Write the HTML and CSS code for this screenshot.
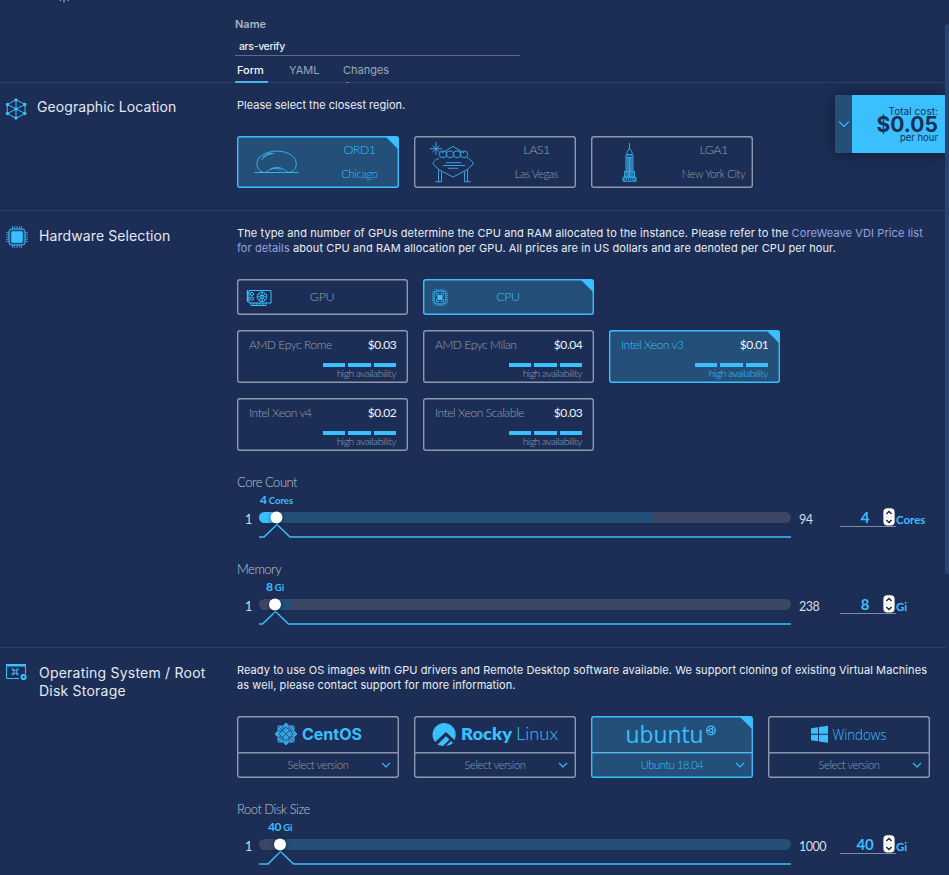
FILE: index.html
```html
<!DOCTYPE html>
<html lang="en">
<head>
<meta charset="utf-8">
<title>Virtual Server</title>
<link rel="stylesheet" href="styles.css">
</head>
<body>
<svg width="0" height="0" class="defs">
  <defs>
    <symbol id="chev" viewBox="0 0 10 6"><path d="M1 1l4 4 4-4" fill="none" stroke="#3abfff" stroke-width="1.1"/></symbol>
    <symbol id="spin" viewBox="0 0 12 18">
      <rect x=".4" y=".2" width="11.2" height="17.4" rx="4" fill="#fff"/>
      <path d="M.4 9h11.2" stroke="#ddd" stroke-width=".8"/>
      <path d="M3.4 6L6 3.5 8.600 6M3.400 12L6 14.500 8.600 12" fill="none" stroke="#222" stroke-width="1.400"/>
    </symbol>
  </defs>
</svg>
<div class="page">
  <header class="top">
    <svg class="crumb" width="12" height="3" viewBox="0 0 12 3"><path d="M1.500 0v1M5 0v2.500M9 0v1" stroke="#9aa5ba" stroke-width="1.200"/></svg>
    <label class="name-label"><span>Name</span></label>
    <div class="name-input"><span>ars-verify</span></div>
    <nav class="tabs">
      <div class="tab on"><span>Form</span></div>
      <div class="tab t2"><span>YAML</span></div>
      <div class="tab t3"><span>Changes</span></div>
    </nav>
    <div class="dot"></div>
  </header>

  <section class="sec geo">
    <div class="side">
      <svg class="ico" width="22" height="22" viewBox="0 0 22 22">
        <path d="M11 1.700L20 6.500V15.500L11 20.300 2.300 15.500V6.500zM11 1.700V20.300M2.300 6.500L20 15.500M20 6.500L2.300 15.500" fill="none" stroke="#3abfff" stroke-width="1"/>
        <g fill="#3abfff"><circle cx="11" cy="2" r="1.700"/><circle cx="19.800" cy="6.500" r="1.700"/><circle cx="19.800" cy="15.500" r="1.700"/><circle cx="11" cy="20" r="1.700"/><circle cx="2.400" cy="15.500" r="1.700"/><circle cx="2.400" cy="6.500" r="1.700"/><circle cx="11" cy="11" r="1.700"/></g>
      </svg>
      <h2 class="h-geo">Geographic Location</h2>
    </div>
    <div class="main">
      <p class="desc"><span class="d0">Please select the closest region.</span></p>
      <div class="row locs">
        <div class="card loc on">
          <svg class="pic" width="46" height="42" viewBox="0 0 46 42" fill="none" stroke="#3abfff" stroke-width="1">
            <path d="M.5 25.500H44.500M9 25C3 24 1 16 5 11 13 2 32 2 39.500 10 45 17 42 24 35 25.500 31 24.500 30 20.500 22.500 20.500 15 21 15 24.500 11 25.500M17 22.500c3-1.500 8-1.500 10.500 1M7.500 13c3-4.500 8-6 12.500-6.500M8.500 10.500c3-3 6-4 9.500-4.500"/>
          </svg>
          <div class="lt"><b>ORD1</b><i>Chicago</i></div>
        </div>
        <div class="card loc">
          <svg class="pic" width="46" height="42" viewBox="0 0 46 42" fill="none" stroke="#3abfff" stroke-width="1">
            <g transform="translate(-1 -1.500) scale(1 .93)"><path d="M12 8L23 1 34 8M9 14C5 15 3 18 3 20L9 26 23 34 37 26 43 20C43 17 39 14 37 13M16 18.500H31M13 21.500H35M18 24.500H28M8.500 26V39H5M11.500 28V39H8M37.500 26V39H41M34.500 28V39H38M6-4V10M0 3.500H12M2.500 0L9.500 7M9.500 0L2.500 7"/>
            <circle cx="13" cy="9.500" r="3.700"/><circle cx="20" cy="9.500" r="3.700"/><circle cx="27" cy="9.500" r="3.700"/><circle cx="34" cy="9.500" r="3.700"/></g>
          </svg>
          <div class="lt"><b>LAS1</b><i>Las Vegas</i></div>
        </div>
        <div class="card loc">
          <svg class="pic" width="46" height="42" viewBox="0 0 46 42" fill="none" stroke="#3abfff" stroke-width="1">
            <g transform="translate(-1 -1.500) scale(1 .93)"><path d="M22.500-3V4M22.500 3L20 7V10L25 10V7zM19 10H26V34H19zM19 13H26M21 12V34M22.500 12V34M24 12V34M17.500 28V34M27.500 28V34M17 28H28M16 34H29V38.500H16z"/><path d="M19 13H26V34H19z" fill="#3abfff" fill-opacity=".4" stroke="none"/><circle cx="18" cy="36" r="1.500"/><circle cx="22.500" cy="36" r="1.500"/><circle cx="27" cy="36" r="1.500"/></g>
          </svg>
          <div class="lt"><b>LGA1</b><i>New York City</i></div>
        </div>
      </div>
    </div>
  </section>

  <section class="sec hw">
    <div class="side">
      <svg class="ico" width="24" height="24" viewBox="0 0 24 24">
        <path d="M7.500 1V23M9.700 1V23M12 1V23M14.300 1V23M16.500 1V23M1 7.500H23M1 9.700H23M1 12H23M1 14.300H23M1 16.500H23" stroke="#3abfff" stroke-width="1" opacity=".7"/>
        <rect x="4" y="4" width="16" height="16" rx="2.500" fill="#1f4a78" stroke="#3abfff"/><rect x="6.300" y="6.300" width="11.400" height="11.400" rx="1" fill="#3abfff"/>
      </svg>
      <h2 class="h-hw">Hardware Selection</h2>
    </div>
    <div class="main">
      <p class="desc"><span class="d1">The type and number of GPUs determine the CPU and RAM allocated to the instance. Please refer to the <a>CoreWeave VDI Price list</a></span><br><span class="d1"><a>for details</a> about CPU and RAM allocation per GPU. All prices are in US dollars and are denoted per CPU per hour.</span></p>
      <div class="row kinds">
        <div class="card kind">
          <svg class="kico" width="26" height="17" viewBox="0 0 26 17" fill="none" stroke="#3abfff" stroke-width="1">
            <path d="M3 1.500H25V14H3zM.5 3H3M.5 5H3M.5 9H3M.5 11H3M1.500 1V13M5 14V16.500H20V14M8 14v2M11 14v2M14 14v2M17 14v2"/>
            <circle cx="16" cy="7.800" r="4.800"/><circle cx="16" cy="7.800" r="1.300"/><path d="M16 3V6.500M16 9V12.500M11.500 7.800H14.500M17.500 7.800H20.500M13 5L15 7M17 9L19 11M19 5L17 7M15 9L13 11"/><circle cx="6" cy="5" r="1.600"/><circle cx="6" cy="9.500" r="1.600"/>
          </svg><span>GPU</span>
        </div>
        <div class="card kind on">
          <svg class="kico" width="26" height="17" viewBox="0 0 26 17" fill="none" stroke="#3abfff" stroke-width="1">
            <rect x="2" y="2" width="12" height="13" rx="3"/><rect x=".7" y=".7" width="14.600" height="15.600" rx="3" stroke-dasharray="1.200 1" opacity=".8"/><path d="M4.500 6.500V4.500H7M9 4.500H11.500V6.500M11.500 10.500V12.500H9M7 12.500H4.500V10.500" opacity=".8"/><rect x="6" y="6.500" width="4" height="4" fill="#3abfff"/>
          </svg><span>CPU</span>
        </div>
      </div>
      <div class="row cpus">
        <div class="card cpu"><div class="ct"><span>AMD Epyc Rome</span><em>$0.03</em></div><div class="bars"><u></u><u></u><u></u></div><small>high availability</small></div>
        <div class="card cpu"><div class="ct"><span>AMD Epyc Milan</span><em>$0.04</em></div><div class="bars"><u></u><u></u><u></u></div><small>high availability</small></div>
        <div class="card cpu on"><div class="ct"><span>Intel Xeon v3</span><em>$0.01</em></div><div class="bars"><u></u><u></u><u></u></div><small>high availability</small></div>
        <div class="card cpu"><div class="ct"><span>Intel Xeon v4</span><em>$0.02</em></div><div class="bars"><u></u><u></u><u></u></div><small>high availability</small></div>
        <div class="card cpu"><div class="ct"><span>Intel Xeon Scalable</span><em>$0.03</em></div><div class="bars"><u></u><u></u><u></u></div><small>high availability</small></div>
      </div>
      <div class="slider">
        <h3>Core Count</h3>
        <div class="srow">
          <span class="min">1</span>
          <div class="scol">
            <div class="val"><span class="vl v1"><b>4</b> Cores</span></div>
            <svg width="534" height="30" viewBox="0 0 534 30"><rect y="2" width="532" height="11" rx="5.500" fill="#3c4766"/><rect y="2" width="395" height="11" rx="5.500" fill="#234f79"/><rect y="2" width="22" height="11" rx="5.500" fill="#3abfff"/><path d="M0 27H5L18 14.500 31 27H532" fill="none" stroke="#3abfff" stroke-width="1.500"/><circle class="knob" cx="17.500" cy="7.500" r="6"/></svg>
          </div>
          <span class="max">94</span>
          <div class="num"><span>4</span><svg width="12" height="18"><use href="#spin"/></svg></div>
          <span class="unit">Cores</span>
        </div>
      </div>
      <div class="slider">
        <h3>Memory</h3>
        <div class="srow">
          <span class="min">1</span>
          <div class="scol">
            <div class="val"><span class="vl v2"><b>8</b> Gi</span></div>
            <svg width="534" height="30" viewBox="0 0 534 30"><rect y="2" width="532" height="11" rx="5.500" fill="#3c4766"/><rect x="10" y="2" width="24" height="11" rx="5.500" fill="#234f79"/><path d="M0 27H3.500L16.500 14.500 29.500 27H532" fill="none" stroke="#3abfff" stroke-width="1.500"/><circle class="knob" cx="16" cy="7.500" r="6"/></svg>
          </div>
          <span class="max">238</span>
          <div class="num"><span>8</span><svg width="12" height="18"><use href="#spin"/></svg></div>
          <span class="unit">Gi</span>
        </div>
      </div>
    </div>
  </section>

  <section class="sec os">
    <div class="side">
      <svg class="ico" width="22" height="18" viewBox="0 0 22 18">
        <path d="M14 15.500H1.500V1.500H20.500V11" fill="none" stroke="#3abfff"/><path d="M1 1H21V3.500H1z" fill="#3abfff"/>
        <g transform="translate(10.200 8.800) scale(.8)"><path d="M-1.800-1.800h3.600v3.600h-3.600zM-1.800-1.800h-1.100a1.100 1.100 0 1 1 1.100-1.100zM1.800-1.800h1.100a1.100 1.100 0 1 0-1.100-1.100zM-1.800 1.800v1.100a1.100 1.100 0 1 1-1.100-1.100zM1.800 1.800v1.100a1.100 1.100 0 1 0 1.100-1.100z" fill="none" stroke="#3abfff" stroke-width="1.200"/></g>
        <circle cx="18.600" cy="14" r="2.100" fill="none" stroke="#3abfff" stroke-width="2"/>
      </svg>
      <h2 class="h-os">Operating System / Root<br>Disk Storage</h2>
    </div>
    <div class="main">
      <p class="desc"><span class="d3">Ready to use OS images with GPU drivers and Remote Desktop software available. We support cloning of existing Virtual Machines</span><br><span class="d3">as well, please contact support for more information.</span></p>
      <div class="row oss">
        <div class="card osc">
          <svg class="logo" width="162" height="36" viewBox="0 0 162 36">
            <g transform="translate(49 18)" fill="#3abfff" fill-opacity=".8" stroke="#3abfff" stroke-width=".8">
              <path d="M0-11L3-8H8V-3L11 0 8 3V8H3L0 11-3 8H-8V3L-11 0-8-3V-8H-3z"/>
              <path d="M-8-8L8 8M8-8L-8 8M0-7L7 0 0 7-7 0zM-3-8V-4M3-8V-4M-3 8V4M3 8V4M-8-3H-4M-8 3H-4M8-3H4M8 3H4" fill="none" stroke="#1c2e55" stroke-width=".6"/>
            </g>
            <text x="65" y="24" font-family="Inter" font-weight="700" font-size="16" textLength="60" lengthAdjust="spacingAndGlyphs">CentOS</text>
          </svg>
          <div class="sel"><span>Select version</span><svg class="chev" width="10" height="6"><use href="#chev"/></svg></div>
        </div>
        <div class="card osc">
          <svg class="logo" width="162" height="36" viewBox="0 0 162 36">
            <path d="M21 26A11.700 11.700 0 1 1 40.500 24L32 16zM23.500 28.500L32 20.300 35.500 23.500 29 30A12 12 0 0 1 23.500 28.500zM37 25L39 27A12 12 0 0 1 32 30z" fill="#3abfff"/>
            <text x="47" y="24" font-family="Lato" font-weight="800" font-size="17.500" textLength="51" lengthAdjust="spacingAndGlyphs">Rocky</text>
            <text x="102" y="24" font-family="Lato" font-weight="300" font-size="17.500" textLength="42" lengthAdjust="spacingAndGlyphs">Linux</text>
          </svg>
          <div class="sel"><span>Select version</span><svg class="chev" width="10" height="6"><use href="#chev"/></svg></div>
        </div>
        <div class="card osc on">
          <svg class="logo" width="162" height="36" viewBox="0 0 162 36">
            <text x="34.500" y="27" font-family="Open Sans" font-weight="400" font-size="24" textLength="78" lengthAdjust="spacingAndGlyphs">ubuntu</text>
            <circle cx="120" cy="14.500" r="4.300" fill="none" stroke="#3abfff" stroke-width="1.300"/><circle cx="120" cy="14.500" r="1.900" fill="none" stroke="#3abfff" stroke-width="1.200"/><path d="M115 14.500h3M121 16l1.500 2.500M121 13l1.500-2.500" stroke="#3abfff"/>
          </svg>
          <div class="sel"><span>Ubuntu 18.04</span><svg class="chev" width="10" height="6"><use href="#chev"/></svg></div>
        </div>
        <div class="card osc">
          <svg class="logo" width="162" height="36" viewBox="0 0 162 36">
            <path d="M43 12.200L50 11.200V17.700H43zM51 11L60 9.800V17.700H51zM43 18.700H50V25.300L43 24.300zM51 18.700H60V26.700L51 25.500z" fill="#3abfff"/>
            <text x="64.500" y="23.500" font-family="Open Sans" font-weight="300" font-size="14.500" textLength="54" lengthAdjust="spacingAndGlyphs">Windows</text>
          </svg>
          <div class="sel"><span>Select version</span><svg class="chev" width="10" height="6"><use href="#chev"/></svg></div>
        </div>
      </div>
      <div class="slider">
        <h3>Root Disk Size</h3>
        <div class="srow">
          <span class="min">1</span>
          <div class="scol">
            <div class="val"><span class="vl v3"><b>40</b> Gi</span></div>
            <svg width="534" height="30" viewBox="0 0 534 30"><rect y="2" width="532" height="11" rx="5.500" fill="#3c4766"/><rect x="15" y="2" width="517" height="11" rx="5.500" fill="#234f79"/><path d="M0 27H9L21.500 14.500 34.500 27H532" fill="none" stroke="#3abfff" stroke-width="1.500"/><circle class="knob" cx="21" cy="7.500" r="6"/></svg>
          </div>
          <span class="max">1000</span>
          <div class="num"><span>40</span><svg width="12" height="18"><use href="#spin"/></svg></div>
          <span class="unit">Gi</span>
        </div>
      </div>
    </div>
  </section>

  <aside class="cost">
    <div class="toggle"><svg width="12" height="8"><use href="#chev"/></svg></div>
    <div class="total"><span class="c1">Total cost:</span><strong>$0.05</strong><span class="c3">per hour</span></div>
  </aside>
  <div class="scroll"></div>
</div>
</body>
</html>
```
FILE: styles.css
```css
* { box-sizing: border-box; }
body { margin: 0; background: #1c2e55; color: #e9eef6; font-family: Inter, sans-serif; font-size: 11px; }
.defs { position: absolute; }
.page { position: relative; width: 949px; height: 875px; overflow: hidden; }
h2, h3, p { margin: 0; }
b, i, em, small, u { font: inherit; font-style: normal; text-decoration: none; }
span { white-space: nowrap; }

.top { height: 83px; width: 945px; padding-left: 235px; border-bottom: 1px solid #2c4065; position: relative; }
.crumb { position: absolute; left: 59px; top: 0; }
.dot { position: absolute; left: 346px; top: 82px; width: 3px; height: 1px; background: #8f7f55; }
.name-label { display: block; padding-top: 16px; height: 36px; line-height: 17px; font-weight: 600; color: #a9b7c6; }
.name-input { width: 285px; height: 20px; line-height: 21px; padding-left: 4px; border-bottom: 1px solid #5a6a88; font-size: 10.500px; font-weight: 500; letter-spacing: -.35px; }
.tabs { display: flex; height: 27px; line-height: 29px; color: #9aa8bc; }
.tab { height: 27px; padding-left: 2px; }
.tab.on { width: 33px; color: #f4f7fb; font-weight: 500; border-bottom: 2px solid #45b4e8; }
.t2 { margin-left: 19px; width: 54px; }
.t3 { width: 50px; }

.sec { display: flex; width: 945px; border-bottom: 1px solid #22466f; }
.geo { height: 128px; }
.hw { height: 437px; }
.os { height: 240px; border-bottom: 0; }
.side { width: 237px; flex: none; display: flex; align-items: flex-start; }
.geo .ico { margin: 15px 10px 0 5px; }
.hw .ico { margin: 14px 10px 0 5px; }
.os .ico { margin: 15px 12px 0 5px; }
h2 { font-size: 14px; font-weight: 400; line-height: 18px; color: #e3e9f3; white-space: nowrap; }
.geo h2 { margin-top: 15px; letter-spacing: .08px; }
.hw h2 { margin-top: 16px; letter-spacing: .1px; }
.os h2 { margin-top: 16px; letter-spacing: .22px; }
.main { width: 708px; }
.desc { line-height: 15px; font-size: 11px; padding-top: 15px; height: 53px; }
.desc a { color: #97a2e0; }
.d0 { letter-spacing: .01px; }
.d1 { letter-spacing: .1px; }
.d3 { letter-spacing: .08px; }

.row { display: flex; flex-wrap: wrap; }
.card { position: relative; border-radius: 3px; box-shadow: inset 0 0 0 1.400px #8d98ad; color: #93a0b6; font-family: Lato, sans-serif; font-weight: 300; }
.card.on { background: #234f79; box-shadow: inset 0 0 0 1.400px #3abfff; color: #3abfff; }
.card.on::after { content: ""; position: absolute; right: 1px; top: 1px; border-top: 12px solid #3abfff; border-left: 12px solid transparent; }
.locs, .oss { column-gap: 15px; }
.loc { width: 162px; height: 52px; display: flex; }
.pic { margin: 11px 0 0 17px; overflow: visible; opacity: .85; flex: none; }
.lt { width: 99px; flex: none; margin-left: 10px; display: flex; flex-direction: column; align-items: center; line-height: 24px; padding-top: 2px; }
.lt b { font-size: 12.500px; letter-spacing: -.55px; }
.lt i { font-size: 11px; letter-spacing: -.3px; white-space: nowrap; }

.hw .desc, .os .desc { height: 68px; }
.kinds, .cpus { column-gap: 15px; row-gap: 15px; }
.kind { width: 171px; height: 36px; display: flex; align-items: center; padding-left: 9px; font-size: 12.500px; letter-spacing: -.4px; }
.kind span { width: 100px; text-align: center; padding-bottom: 1px; }
.cpus { margin-top: 15px; }
.cpu { width: 171px; height: 53px; padding: 6px 12px 0; }
.ct { display: flex; justify-content: space-between; line-height: 17px; height: 27px; font-size: 12px; letter-spacing: -.45px; }
.ct em { color: #f1f5fa; font-weight: 400; margin-right: -.3px; }
.bars { display: flex; gap: 3px; justify-content: flex-end; }
.bars u { width: 22.500px; height: 4px; background: #3abfff; }
.cpu small { display: block; text-align: right; font-size: 10.500px; line-height: 12px; letter-spacing: -.55px; }

.slider { height: 87px; font-family: Lato, sans-serif; }
.cpus + .slider { margin-top: 23px; }
.slider h3 { font-size: 13px; font-weight: 300; line-height: 16px; color: #bac5d3; letter-spacing: -.5px; }
.srow { display: flex; height: 50px; }
.min, .max { width: 22px; padding-left: 8px; line-height: 60px; font-size: 12.500px; letter-spacing: -.5px; color: #d5dce8; }
.max { width: 49px; }
.scol { width: 532px; }
.scol svg { display: block; overflow: visible; }
.val { height: 20px; line-height: 20px; color: #3abfff; font-size: 9.500px; font-weight: 700; }
.val b { font-size: 12px; font-weight: 700; letter-spacing: -.5px; }
.v1 { margin-left: 1px; }
.v2 { margin-left: 7px; }
.v3 { margin-left: 9px; }
.knob { fill: #fff; filter: drop-shadow(0 1px 2px rgba(0, 0, 0, .5)); }
.num { width: 56px; height: 37px; border-bottom: 1px solid #7f8ba3; display: flex; justify-content: flex-end; align-items: flex-end; padding-right: 1px; color: #3abfff; font-weight: 700; font-size: 15px; }
.num span { width: 30px; text-align: center; line-height: 18px; margin-right: 3px; letter-spacing: -.3px; }
.unit { line-height: 60px; color: #3abfff; font-weight: 700; font-size: 11.500px; }

.osc { width: 162px; height: 62px; }
.logo { display: block; height: 36px; fill: #3abfff; }
.sel { position: relative; height: 26px; line-height: 23px; text-align: center; font-size: 11px; letter-spacing: -.35px; border-top: 1.500px solid #8793a9; box-shadow: inset 0 1px 0 -.5px #8793a9; }
.on .sel { border-top-color: #3abfff; }
.chev { position: absolute; right: 8px; top: 9px; }
.oss + .slider { margin-top: 23px; }

.cost { position: absolute; left: 835px; top: 95px; width: 110px; height: 58px; display: flex; border-radius: 3px 0 0 3px; box-shadow: 0 1px 14px rgba(8, 14, 34, .6); background: #3abfff; color: #173054; }
.toggle { width: 17px; background: #234f79; border-radius: 3px 0 0 3px; display: flex; align-items: center; justify-content: center; }
.total { width: 93px; padding: 10px 7px 0 0; display: flex; flex-direction: column; align-items: flex-end; font-size: 10px; }
.total span { line-height: 12px; }
.total .c1 { letter-spacing: .05px; }
.total .c3 { font-size: 9.500px; margin-top: -1px; }
.total strong { font-size: 21px; line-height: 16px; letter-spacing: .05px; }
.scroll { position: absolute; left: 945px; top: 24px; width: 6px; height: 550px; border-radius: 3px; background: #2a4370; }
```
